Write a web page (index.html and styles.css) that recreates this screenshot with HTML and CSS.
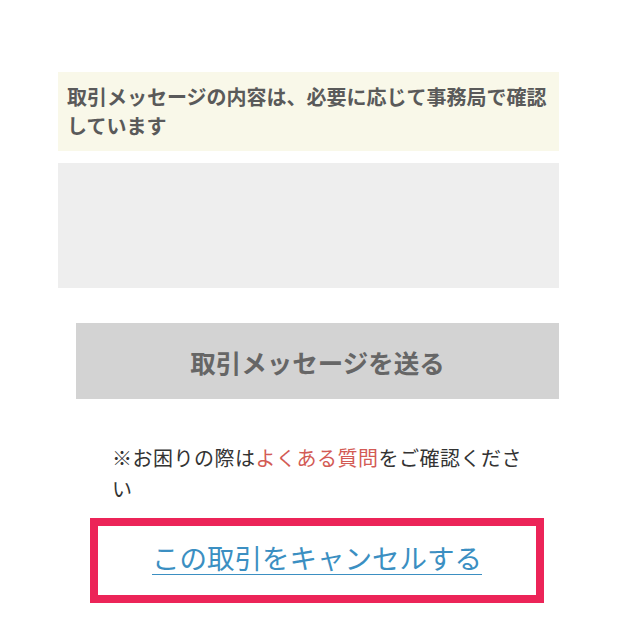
FILE: index.html
```html
<!DOCTYPE html>
<html lang="ja">
<head>
  <meta charset="UTF-8">
  <meta name="viewport" content="width=device-width, initial-scale=1.0">
  <title>取引メッセージ</title>
  <link rel="stylesheet" href="styles.css">
</head>
<body>
  <main class="trade">
    <!-- notice -->
    <p class="notice">取引メッセージの内容は、必要に応じて事務局で確認しています</p>

    <textarea class="message-input" aria-label="取引メッセージ"></textarea>

    <button class="send-btn" type="button">取引メッセージを送る</button>

    <p class="help">※お困りの際は<a href="#" class="help-link">よくある質問</a>をご確認ください</p>

    <div class="cancel-box">
      <a href="#" class="cancel-link">この取引をキャンセルする</a>
    </div>
  </main>
</body>
</html>
```

FILE: styles.css
```css
* {
  margin: 0;
  padding: 0;
  box-sizing: border-box;
  font-family: "Noto Sans CJK JP", "Noto Sans", sans-serif;
}

body {
  background-color: #fff;
  color: #333;
}

.trade {
  width: 501px;
  margin-left: 58px;
  padding-top: 72px;
  display: flex;
  flex-direction: column;
}

.notice {
  background-color: #f9f8e9;
  color: #5a5a5a;
  font-size: 20px;
  font-weight: 700;
  line-height: 29px;
  padding: 10px 8px 11px 9px;
}

.message-input {
  display: block;
  margin-top: 12px;
  height: 125px;
  width: 100%;
  border: none;
  background-color: #eeeeee;
  resize: none;
}

.send-btn {
  margin-top: 35px;
  margin-left: 18px;
  height: 76px;
  border: none;
  background-color: #d3d3d3;
  color: #666;
  font-size: 25.5px;
  font-weight: 700;
  cursor: pointer;
}

.help {
  margin-top: 43px;
  padding: 0 30px 0 54px;
  font-size: 20px;
  line-height: 31px;
  letter-spacing: 0.5px;
  color: #333;
}

.help-link {
  color: #d35b55;
  text-decoration: none;
}

.cancel-box {
  margin-top: 14px;
  margin-left: 32px;
  width: 454px;
  height: 85px;
  border: 8px solid #ec2458;
  padding-bottom: 8px;
  display: flex;
  align-items: center;
  justify-content: center;
}

.cancel-link {
  color: #3b8fc2;
  font-size: 27.5px;
  text-decoration: underline;
  text-underline-offset: 5px;
  text-decoration-thickness: 1px;
}
```
